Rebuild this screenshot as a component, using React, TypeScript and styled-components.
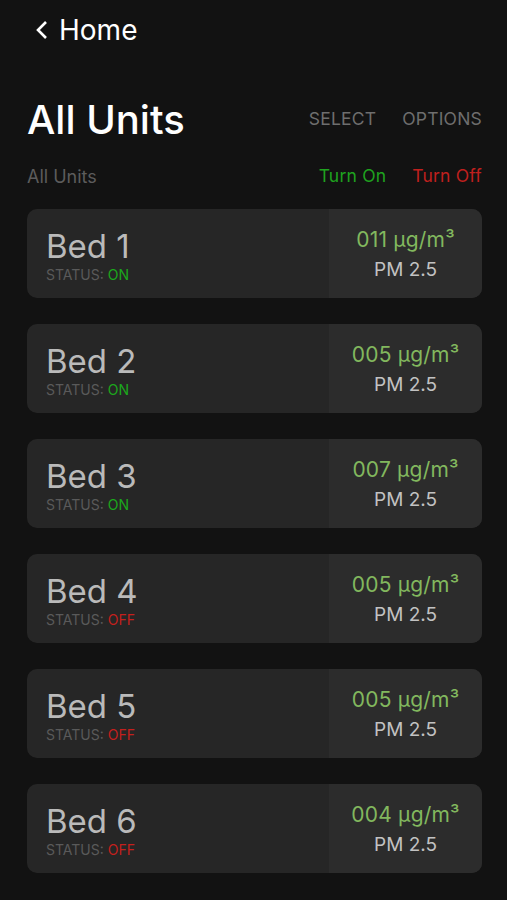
import styled, { createGlobalStyle } from "styled-components";

const GlobalStyle = createGlobalStyle`
    body {
        margin: 0;
        background-color: #121212;
        font-family: Inter, "Liberation Sans", sans-serif;
    }
`;

const Page = styled.div`
    width: 507px;
    min-height: 900px;
    background-color: #121212;
    padding: 0 25px 0 27px;
    box-sizing: border-box;
`;

const NavBar = styled.div`
    display: flex;
    align-items: center;
    height: 60px;
    padding-left: 8px;
    color: #ffffff;
    font-size: 28px;
`;

const BackChevron = styled.svg`
    width: 14px;
    height: 20px;
    margin-right: 10px;
`;

const TitleRow = styled.div`
    display: flex;
    align-items: center;
    justify-content: space-between;
    margin-top: 32px;
    height: 54px;
`;

const Title = styled.h1`
    margin: 0;
    font-size: 40px;
    font-weight: 500;
    color: #ffffff;
`;

const Actions = styled.div`
    display: flex;
    gap: 26px;
    padding-bottom: 1px;
`;

const ActionText = styled.span<{ tone: string }>`
    color: ${(props) => props.tone};
    font-size: 17.5px;
    letter-spacing: 0.2px;
`;

const SubRow = styled.div`
    display: flex;
    align-items: center;
    justify-content: space-between;
    margin-top: 4px;
    height: 52px;
    margin-bottom: 7px;
`;

const SubTitle = styled.span`
    color: #5c5c5c;
    font-size: 18px;
`;

const List = styled.div`
    display: flex;
    flex-direction: column;
    gap: 26px;
`;

const Card = styled.div`
    display: flex;
    height: 89px;
    border-radius: 10px;
    overflow: hidden;
    background-color: #262626;
`;

const CardInfo = styled.div`
    flex: 1;
    display: flex;
    flex-direction: column;
    justify-content: center;
    padding-left: 19px;
    padding-top: 3px;
`;

const BedName = styled.div`
    color: #bababa;
    font-size: 33px;
    line-height: 36px;
`;

const StatusLine = styled.div`
    color: #5a5a5a;
    font-size: 14px;
    line-height: 16px;
    margin-top: 3px;
`;

const StatusValue = styled.span<{ on: boolean }>`
    color: ${(props) => (props.on ? "#1ca81c" : "#c4201d")};
`;

const Reading = styled.div`
    width: 153px;
    display: flex;
    flex-direction: column;
    align-items: center;
    justify-content: center;
    gap: 7px;
    padding-top: 2px;
    background-color: #2c2c2c;
`;

const Value = styled.div`
    color: #82b85e;
    font-size: 21px;
    line-height: 24px;
    letter-spacing: 0.2px;
`;

const Label = styled.div`
    color: #c2c2c2;
    font-size: 19px;
    line-height: 22px;
`;

const units = [
    { name: "Bed 1", on: true, value: "011" },
    { name: "Bed 2", on: true, value: "005" },
    { name: "Bed 3", on: true, value: "007" },
    { name: "Bed 4", on: false, value: "005" },
    { name: "Bed 5", on: false, value: "005" },
    { name: "Bed 6", on: false, value: "004" },
];

export default function App() {
    return (
        <Page>
            <GlobalStyle />
            <NavBar>
                <BackChevron viewBox="0 0 14 20">
                    <path d="M11 2 L3 10 L11 18" fill="none" stroke="#ffffff" strokeWidth="2.6" />
                </BackChevron>
                Home
            </NavBar>

            <TitleRow>
                <Title>All Units</Title>
                <Actions>
                    <ActionText tone="#6e6e6e">SELECT</ActionText>
                    <ActionText tone="#6e6e6e">OPTIONS</ActionText>
                </Actions>
            </TitleRow>

            <SubRow>
                <SubTitle>All Units</SubTitle>
                <Actions>
                    <ActionText tone="#1fa31f">Turn On</ActionText>
                    <ActionText tone="#c0201e">Turn Off</ActionText>
                </Actions>
            </SubRow>

            <List>
                {units.map((unit) => (
                    <Card key={unit.name}>
                        <CardInfo>
                            <BedName>{unit.name}</BedName>
                            <StatusLine>
                                STATUS: <StatusValue on={unit.on}>{unit.on ? "ON" : "OFF"}</StatusValue>
                            </StatusLine>
                        </CardInfo>
                        <Reading>
                            <Value>{unit.value} µg/m³</Value>
                            <Label>PM 2.5</Label>
                        </Reading>
                    </Card>
                ))}
            </List>
        </Page>
    );
}
